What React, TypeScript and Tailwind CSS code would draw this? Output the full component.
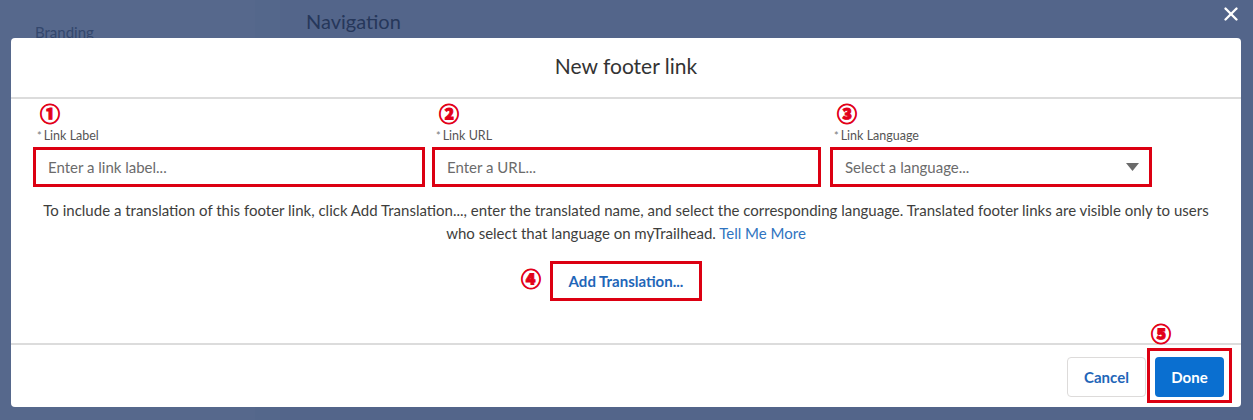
import { X } from "lucide-react";

const fields = [
  { mark: "①", label: "Link Label", placeholder: "Enter a link label...", width: "w-[392px]" },
  { mark: "②", label: "Link URL", placeholder: "Enter a URL...", width: "w-[389px]" },
  { mark: "③", label: "Link Language", placeholder: "Select a language...", width: "w-[322px]", select: true },
];

function Mark({ children }: { children: string }) {
  return (
    <span className="text-[20px] leading-[20px] font-black text-[#e2001a] [-webkit-text-stroke:0.9px_#e2001a] [font-family:'Noto_Sans_CJK_JP',sans-serif]">
      {children}
    </span>
  );
}

export default function App() {
  return (
    <div className="relative w-[1253px] h-[420px] overflow-hidden bg-[#53658a] [font-family:Lato,sans-serif]">
      {/* page behind the overlay */}
      <div className="flex h-full">
        <div className="w-[255px] bg-[#56688c] pl-[35px] pt-[21px] text-[15px] text-[#33476d]">Branding</div>
        <div className="w-[25px] bg-[#54678b]" />
        <div className="flex-1 pl-[26px] pt-[6px] text-[20px] text-[#26375a]">Navigation</div>
      </div>

      <button className="absolute right-[11px] top-[3px] text-white">
        <X size={22} strokeWidth={2.6} />
      </button>

      {/* modal */}
      <div className="absolute left-[11px] top-[38px] w-[1230px] h-[369px] bg-white rounded-[4px] flex flex-col">
        <div className="h-[61px] border-b-2 border-[#dcdcdc] flex items-center justify-center text-[21px] text-[#333] pb-[4px]">
          New footer link
        </div>

        <div className="h-[244px] pt-[5px]">
          <div className="flex pl-[22px] gap-[7px]">
            {fields.map((f, i) => (
              <div key={f.label} className={`${f.width} ${i === 2 ? "ml-[2px]" : ""}`}>
                <div className="pl-[7px] h-[21px]">
                  <Mark>{f.mark}</Mark>
                </div>
                <div className="pl-[4px] text-[12.5px] leading-[14px] h-[22px] pt-[4px]">
                  <span className="text-[#777] text-[11px] mr-[2px] align-top">*</span>
                  <span className="text-[#555]">{f.label}</span>
                </div>
                <div className="h-[40px] border-[3px] border-[#dc0012] flex items-center justify-between pl-[12px] pr-[10px] text-[15px] text-[#6b6b6b]">
                  <span>{f.placeholder}</span>
                  {f.select && (
                    <svg width="13" height="8" viewBox="0 0 13 8">
                      <path d="M0 0h13L6.5 8z" fill="#6b6b6b" />
                    </svg>
                  )}
                </div>
              </div>
            ))}
          </div>

          <p className="mt-[12px] text-center text-[15px] leading-[23px] text-[#3e3e3c]">
            To include a translation of this footer link, click Add Translation..., enter the translated name, and select the
            corresponding language. Translated footer links are visible only to users
            <br />
            who select that language on myTrailhead. <span className="text-[#2f74c0]">Tell Me More</span>
          </p>

          <div className="mt-[16px] flex justify-center">
            <div className="relative">
              <span className="absolute right-full mr-[9px] top-[8px]">
                <Mark>④</Mark>
              </span>
              <div className="w-[152px] h-[40px] border-[3px] border-[#dc0012] flex items-center justify-center text-[15px] font-bold text-[#1f66b8]">
                Add Translation...
              </div>
            </div>
          </div>
        </div>

        <div className="flex-1 border-t-2 border-[#dcdcdc] flex justify-end items-start pt-[12px] pr-[9px]">
          <button className="w-[79px] h-[40px] border border-[#dddbda] rounded-[4px] text-[15px] font-bold text-[#1f66b8]">
            Cancel
          </button>
          <div className="relative ml-[1px] -mt-[9px] border-[3px] border-[#dc0012] px-[5px] pt-[6px] pb-[3px]">
            <span className="absolute left-[1px] -top-[27px]">
              <Mark>⑤</Mark>
            </span>
            <button className="w-[69px] h-[40px] rounded-[4px] bg-[#0a6fd0] text-[15px] font-bold text-white">Done</button>
          </div>
        </div>
      </div>
    </div>
  );
}
